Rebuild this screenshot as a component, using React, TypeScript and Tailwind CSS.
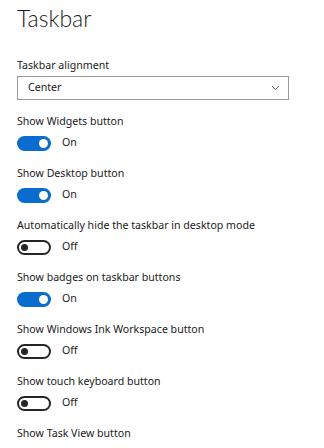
import React from 'react';

const font = { fontFamily: '"Noto Sans", "Open Sans", sans-serif' };

function Toggle({ on }: { on: boolean }) {
  return (
    <div className="flex items-center h-5 mt-1">
      {on ? (
        <div className="w-[34px] h-[15px] rounded-full bg-[#0a6cce] flex items-center justify-end pr-[3px]">
          <div className="w-[9px] h-[9px] rounded-full bg-white" />
        </div>
      ) : (
        <div className="w-[34px] h-[15px] rounded-full border-2 border-[#262626] flex items-center pl-[2px]">
          <div className="w-[7px] h-[7px] rounded-full bg-[#262626]" />
        </div>
      )}
      <span className="ml-[11px] text-[10.6px] text-[#1a1a1a]">{on ? 'On' : 'Off'}</span>
    </div>
  );
}

const settings = [
  { label: 'Show Widgets button', on: true },
  { label: 'Show Desktop button', on: true },
  { label: 'Automatically hide the taskbar in desktop mode', on: false },
  { label: 'Show badges on taskbar buttons', on: true },
  { label: 'Show Windows Ink Workspace button', on: false },
  { label: 'Show touch keyboard button', on: false },
];

export default function App() {
  return (
    <div className="w-[324px] h-[448px] overflow-hidden bg-white pl-[17px] pt-[2px]" style={font}>
      <h1
        className="text-[23px] leading-[32px] font-light text-[#1a1a1a]"
        style={{ fontFamily: 'Lato, "Noto Sans", sans-serif' }}
      >
        Taskbar
      </h1>
      <p className="mt-[23px] text-[10.6px] leading-4 text-[#1a1a1a]">Taskbar alignment</p>
      <div className="mt-[3px] w-[272px] h-6 border border-[#9a9a9a] flex items-center justify-between pl-[10px] pr-[8px]">
        <span className="text-[10.6px] text-[#1a1a1a]">Center</span>
        <svg width="9" height="6" viewBox="0 0 9 6" fill="none">
          <path d="M1 1l3.5 3.5L8 1" stroke="#555" strokeWidth="1" />
        </svg>
      </div>
      <div className="mt-[13px] flex flex-col">
        {settings.map((s) => (
          <div key={s.label} className="mb-3">
            <p className="text-[10.6px] leading-4 text-[#1a1a1a]">{s.label}</p>
            <Toggle on={s.on} />
          </div>
        ))}
        <p className="text-[10.6px] leading-4 text-[#1a1a1a]">Show Task View button</p>
      </div>
    </div>
  );
}
